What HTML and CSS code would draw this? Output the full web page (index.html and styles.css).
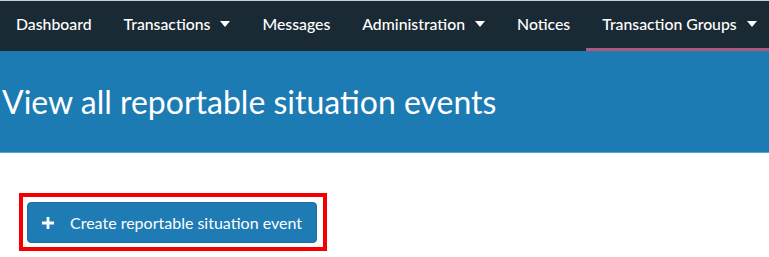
FILE: index.html
```html
<!DOCTYPE html>
<html lang="en">

<head>
    <meta charset="UTF-8">
    <title>Reportable situation events</title>
    <link rel="stylesheet" href="styles.css">
</head>

<body>
    <nav class="topnav">
        <a class="nav-item">Dashboard</a>
        <a class="nav-item">Transactions <span class="caret"></span></a>
        <a class="nav-item">Messages</a>
        <a class="nav-item">Administration <span class="caret"></span></a>
        <a class="nav-item">Notices</a>
        <a class="nav-item active">Transaction Groups <span class="caret"></span></a>
    </nav>

    <header class="page-header">
        <h1>View all reportable situation events</h1>
    </header>

    <main class="content">
        <div class="highlight">
            <button class="btn-create" type="button">
                <svg class="plus" width="12" height="12" viewBox="0 0 12 12">
                    <path d="M4.6 0h2.8v4.6H12v2.8H7.4V12H4.6V7.4H0V4.6h4.6z" fill="#fff" />
                </svg>
                Create reportable situation event
            </button>
        </div>
    </main>
</body>

</html>
```

FILE: styles.css
```css
/* Basic Reset */
* {
    margin: 0;
    padding: 0;
    box-sizing: border-box;
}

body {
    font-family: 'Lato', 'Liberation Sans', sans-serif;
    background: #fff;
    color: #333;
}

/* Top navigation */
.topnav {
    display: flex;
    height: 51px;
    background-color: #1a2a35;
    border-top: 1px solid #c9cdd0;
}

.nav-item {
    display: flex;
    align-items: center;
    gap: 10px;
    padding: 0 16px 2px;
    color: #fff;
    font-size: 15.8px;
    font-weight: 500;
    white-space: nowrap;
    text-decoration: none;
    border-bottom: 3px solid transparent;
}

.nav-item.active {
    border-bottom-color: #b0577c;
    flex: 1;
}

.caret {
    display: inline-block;
    width: 0;
    height: 0;
    border-left: 5px solid transparent;
    border-right: 5px solid transparent;
    border-top: 6px solid #fff;
}

/* Page header */
.page-header {
    height: 102px;
    background-color: #1d7bb3;
    border-bottom: 1px solid #5aa3cf;
    display: flex;
    align-items: center;
    padding-left: 2px;
}

.page-header h1 {
    color: #fff;
    font-weight: 400;
    font-size: 32px;
}

/* Content */
.content {
    padding: 40px 19px 0;
}

.highlight {
    display: inline-block;
    border: 4px solid #f50000;
    padding: 5px 6px 4px 4px;
}

.btn-create {
    display: flex;
    align-items: center;
    gap: 16px;
    width: 290px;
    height: 41px;
    padding: 0 14px;
    background-color: #1e7bb4;
    border: 1px solid #1a6ea3;
    border-radius: 4px;
    color: #fff;
    font-family: inherit;
    font-size: 16px;
    cursor: pointer;
}
```
